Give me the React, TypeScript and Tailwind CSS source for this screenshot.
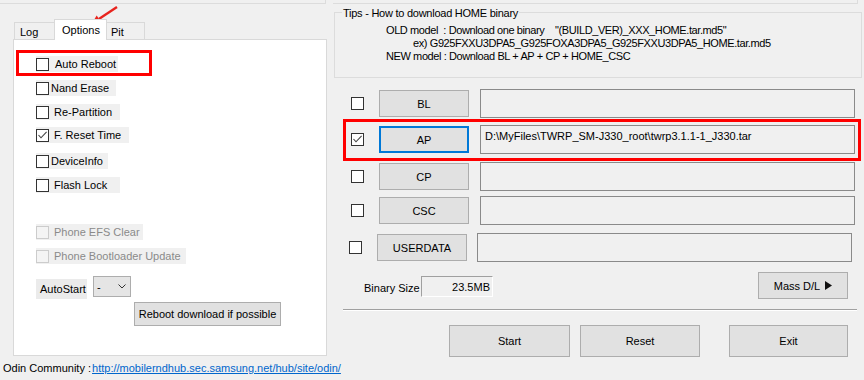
import React from 'react';

type Opt = {
  label: string;
  mt: string;
  w: string;
  pl: string;
  checked?: boolean;
  disabled?: boolean;
};

const options: Opt[] = [
  { label: 'Auto Reboot', mt: 'mt-[16px]', w: 'w-[82px]', pl: 'pl-[6px]' },
  { label: 'Nand Erase', mt: 'mt-[8px]', w: 'w-[80px]', pl: 'pl-[2px]' },
  { label: 'Re-Partition', mt: 'mt-[8px]', w: 'w-[84px]', pl: 'pl-[5px]' },
  { label: 'F. Reset Time', mt: 'mt-[7px]', w: 'w-[93px]', pl: 'pl-[5px]', checked: true },
  { label: 'DeviceInfo', mt: 'mt-[10px]', w: 'w-[72px]', pl: 'pl-[2px]' },
  { label: 'Flash Lock', mt: 'mt-[8px]', w: 'w-[84px]', pl: 'pl-[5px]' },
  { label: 'Phone EFS Clear', mt: 'mt-[31px]', w: 'w-[107px]', pl: 'pl-[5px]', disabled: true },
  { label: 'Phone Bootloader Update', mt: 'mt-[8px]', w: 'w-[150px]', pl: 'pl-[5px]', disabled: true },
];

function CheckBox({ checked = false, disabled = false }: { checked?: boolean; disabled?: boolean }) {
  return (
    <span
      className={
        disabled
          ? 'w-[13px] h-[13px] shrink-0 border border-[#cccccc] bg-[#f4f4f4]'
          : 'w-[13px] h-[13px] shrink-0 border border-[#333333] bg-white flex items-center justify-center'
      }
    >
      {checked && (
        <svg width="11" height="11" viewBox="0 0 11 11">
          <path d="M1.5 5 L4 7.8 L9.6 1.8" fill="none" stroke="#444" strokeWidth="1.1" />
        </svg>
      )}
    </span>
  );
}

function OptionsPanel() {
  return (
    <div className="relative ml-[13px] w-[314px] h-[317px] bg-white border border-[#d9d9d9]">
      {/* annotation frame */}
      <div className="absolute left-[2px] top-[10px] w-[136px] h-[26px] border-[3px] border-[#ff0000]" />

      <div className="flex flex-col">
        {options.map((o) => (
          <div key={o.label} className={`${o.mt} ml-[22px] ${o.w} h-[16px] bg-[#f0f0f0] flex items-center`}>
            <CheckBox checked={o.checked} disabled={o.disabled} />
            <span className={`${o.pl} whitespace-nowrap ${o.disabled ? 'text-[#8a8a8a]' : 'text-black'}`}>
              {o.label}
            </span>
          </div>
        ))}

        <div className="mt-[12px] ml-[22px] flex items-start h-[23px]">
          <div className="mt-[3px] w-[51px] h-[20px] bg-[#ebebeb] flex items-center pl-[4px]">AutoStart</div>
          <div className="ml-[6px] w-[38px] h-[21px] border border-[#adadad] bg-[#e5e5e5] flex items-center justify-between pl-[3px] pr-[4px]">
            <span>-</span>
            <svg width="8" height="5" viewBox="0 0 8 5">
              <path d="M0.5 0.5 L4 4 L7.5 0.5" fill="none" stroke="#333" strokeWidth="1" />
            </svg>
          </div>
        </div>

        <div className="mt-[3px] ml-[120px] w-[147px] h-[24px] border border-[#adadad] bg-[#e1e1e1] flex items-center justify-center">
          Reboot download if possible
        </div>
      </div>
    </div>
  );
}

function LeftPane() {
  return (
    <div className="w-[330px] flex flex-col">
      {/* tabs */}
      <div className="mt-[15px] ml-[14px] h-[20px] flex items-end">
        <div className="w-[40px] h-[17px] border-l border-t border-[#d9d9d9] bg-[#f0f0f0] pl-[5px] pt-[2px]">Log</div>
        <div className="relative z-10 -mb-[1px] w-[53px] h-[21px] border-l border-t border-r border-[#d9d9d9] bg-white pl-[7px] pt-[3px]">
          Options
        </div>
        <div className="w-[38px] h-[17px] border-t border-r border-[#d9d9d9] bg-[#f0f0f0] pl-[4px] pt-[2px]">Pit</div>
      </div>

      <OptionsPanel />

      <div className="mt-[5px] ml-[3px] h-[14px] flex items-center whitespace-nowrap">
        <span>Odin Community :</span>
        <span className="ml-[1px] text-[#0066cc] underline">http://mobilerndhub.sec.samsung.net/hub/site/odin/</span>
      </div>
    </div>
  );
}

type Row = { name: string; mt: string; cb: string; field: string; checked?: boolean; active?: boolean; path?: string };

const rows: Row[] = [
  { name: 'BL', mt: 'mt-[11px]', cb: 'ml-[21px]', field: 'ml-[11px]' },
  { name: 'AP', mt: 'mt-[7px]', cb: 'ml-[21px]', field: 'ml-[11px]', checked: true, active: true, path: 'D:\\MyFiles\\TWRP_SM-J330_root\\twrp3.1.1-1_J330.tar' },
  { name: 'CP', mt: 'mt-[8px]', cb: 'ml-[21px]', field: 'ml-[11px]' },
  { name: 'CSC', mt: 'mt-[5px]', cb: 'ml-[21px]', field: 'ml-[11px]' },
  { name: 'USERDATA', mt: 'mt-[8px]', cb: 'ml-[19px]', field: 'ml-[10px]' },
];

function FileRow({ r }: { r: Row }) {
  return (
    <div className={`relative ${r.mt} h-[29px] flex items-center`}>
      {r.active && <div className="absolute left-[13px] -top-[6px] w-[518px] h-[42px] border-[3px] border-[#ff0000]" />}
      <span className={r.cb}>
        <CheckBox checked={r.checked} />
      </span>
      <div
        className={
          r.active
            ? 'ml-[15px] w-[90px] h-[27px] border-2 border-[#0078d7] bg-[#e1e1e1] flex items-center justify-center'
            : 'ml-[15px] w-[90px] h-[27px] border border-[#adadad] bg-[#e1e1e1] flex items-center justify-center'
        }
      >
        {r.name}
      </div>
      <div className={`${r.field} w-[375px] h-[29px] border border-[#8a8a8a] bg-[#f0f0f0] pl-[4px] pt-[3px] whitespace-nowrap`}>
        {r.path}
      </div>
    </div>
  );
}

function RightPane() {
  return (
    <div className="w-[534px] flex flex-col">
      {/* tips group */}
      <div className="mt-[8px] ml-[4px] w-[528px] h-[66px] border border-[#dcdcdc] flex flex-col">
        <div className="-mt-[7px] ml-[7px] w-fit h-[14px] px-[1px] bg-[#f0f0f0] flex items-center tracking-[-0.25px]">
          Tips - How to download HOME binary
        </div>
        <div className="mt-[4px] flex flex-col leading-[13px] tracking-[-0.4px] whitespace-pre">
          <div className="pl-[51px]">{'OLD model  : Download one binary    "(BUILD_VER)_XXX_HOME.tar.md5"'}</div>
          <div className="pl-[78px]">ex) G925FXXU3DPA5_G925FOXA3DPA5_G925FXXU3DPA5_HOME.tar.md5</div>
          <div className="pl-[51px]">NEW model : Download BL + AP + CP + HOME_CSC</div>
        </div>
      </div>

      {rows.map((r) => (
        <FileRow key={r.name} r={r} />
      ))}

      {/* binary size + mass download */}
      <div className="mt-[10px] h-[27px] flex items-start">
        <div className="ml-[34px] w-[57px] h-[27px] flex items-center pt-[4px]">Binary Size</div>
        <div className="mt-[4px] w-[72px] h-[21px] border-t border-l border-[#a0a0a0] border-b-white border-r-white border-b border-r flex items-center justify-end pr-[2px]">
          23.5MB
        </div>
        <div className="ml-auto mr-[16px] w-[90px] h-[27px] border border-[#adadad] bg-[#e1e1e1] flex items-center justify-center gap-[5px]">
          <span>Mass D/L</span>
          <svg width="7" height="9" viewBox="0 0 7 9">
            <path d="M0 0 L7 4.5 L0 9 Z" fill="#111" />
          </svg>
        </div>
      </div>

      <div className="mt-[10px] ml-[13px] w-[514px] h-[2px] border-t border-[#a0a0a0] border-b border-b-white" />

      <div className="mt-[14px] flex">
        <div className="ml-[119px] w-[121px] h-[32px] border border-[#adadad] bg-[#e1e1e1] flex items-center justify-center">Start</div>
        <div className="ml-[10px] w-[120px] h-[32px] border border-[#adadad] bg-[#e1e1e1] flex items-center justify-center">Reset</div>
        <div className="ml-[29px] w-[119px] h-[32px] border border-[#adadad] bg-[#e1e1e1] flex items-center justify-center">Exit</div>
      </div>
    </div>
  );
}

export default function App() {
  return (
    <div className="relative w-[864px] h-[380px] overflow-hidden bg-[#f0f0f0] text-black text-[11px] leading-[14px] font-['Liberation_Sans',Arial,sans-serif]">
      {/* bottoms of the group boxes above */}
      <div className="flex h-[4px]">
        <div className="w-[326px] border-b border-r border-[#dcdcdc]" />
        <div className="ml-[7px] w-[525px] border-b border-r border-[#dcdcdc]" />
      </div>

      <div className="flex">
        <LeftPane />
        <RightPane />
      </div>

      {/* annotation arrow */}
      <svg className="absolute left-0 top-0" width="130" height="30" viewBox="0 0 130 30">
        <line x1="117" y1="7" x2="98.9" y2="18.9" stroke="#e8231d" strokeWidth="2.4" />
        <polygon points="91.5,24 96.7,15.6 101.2,22.3" fill="#e8231d" />
      </svg>
    </div>
  );
}
